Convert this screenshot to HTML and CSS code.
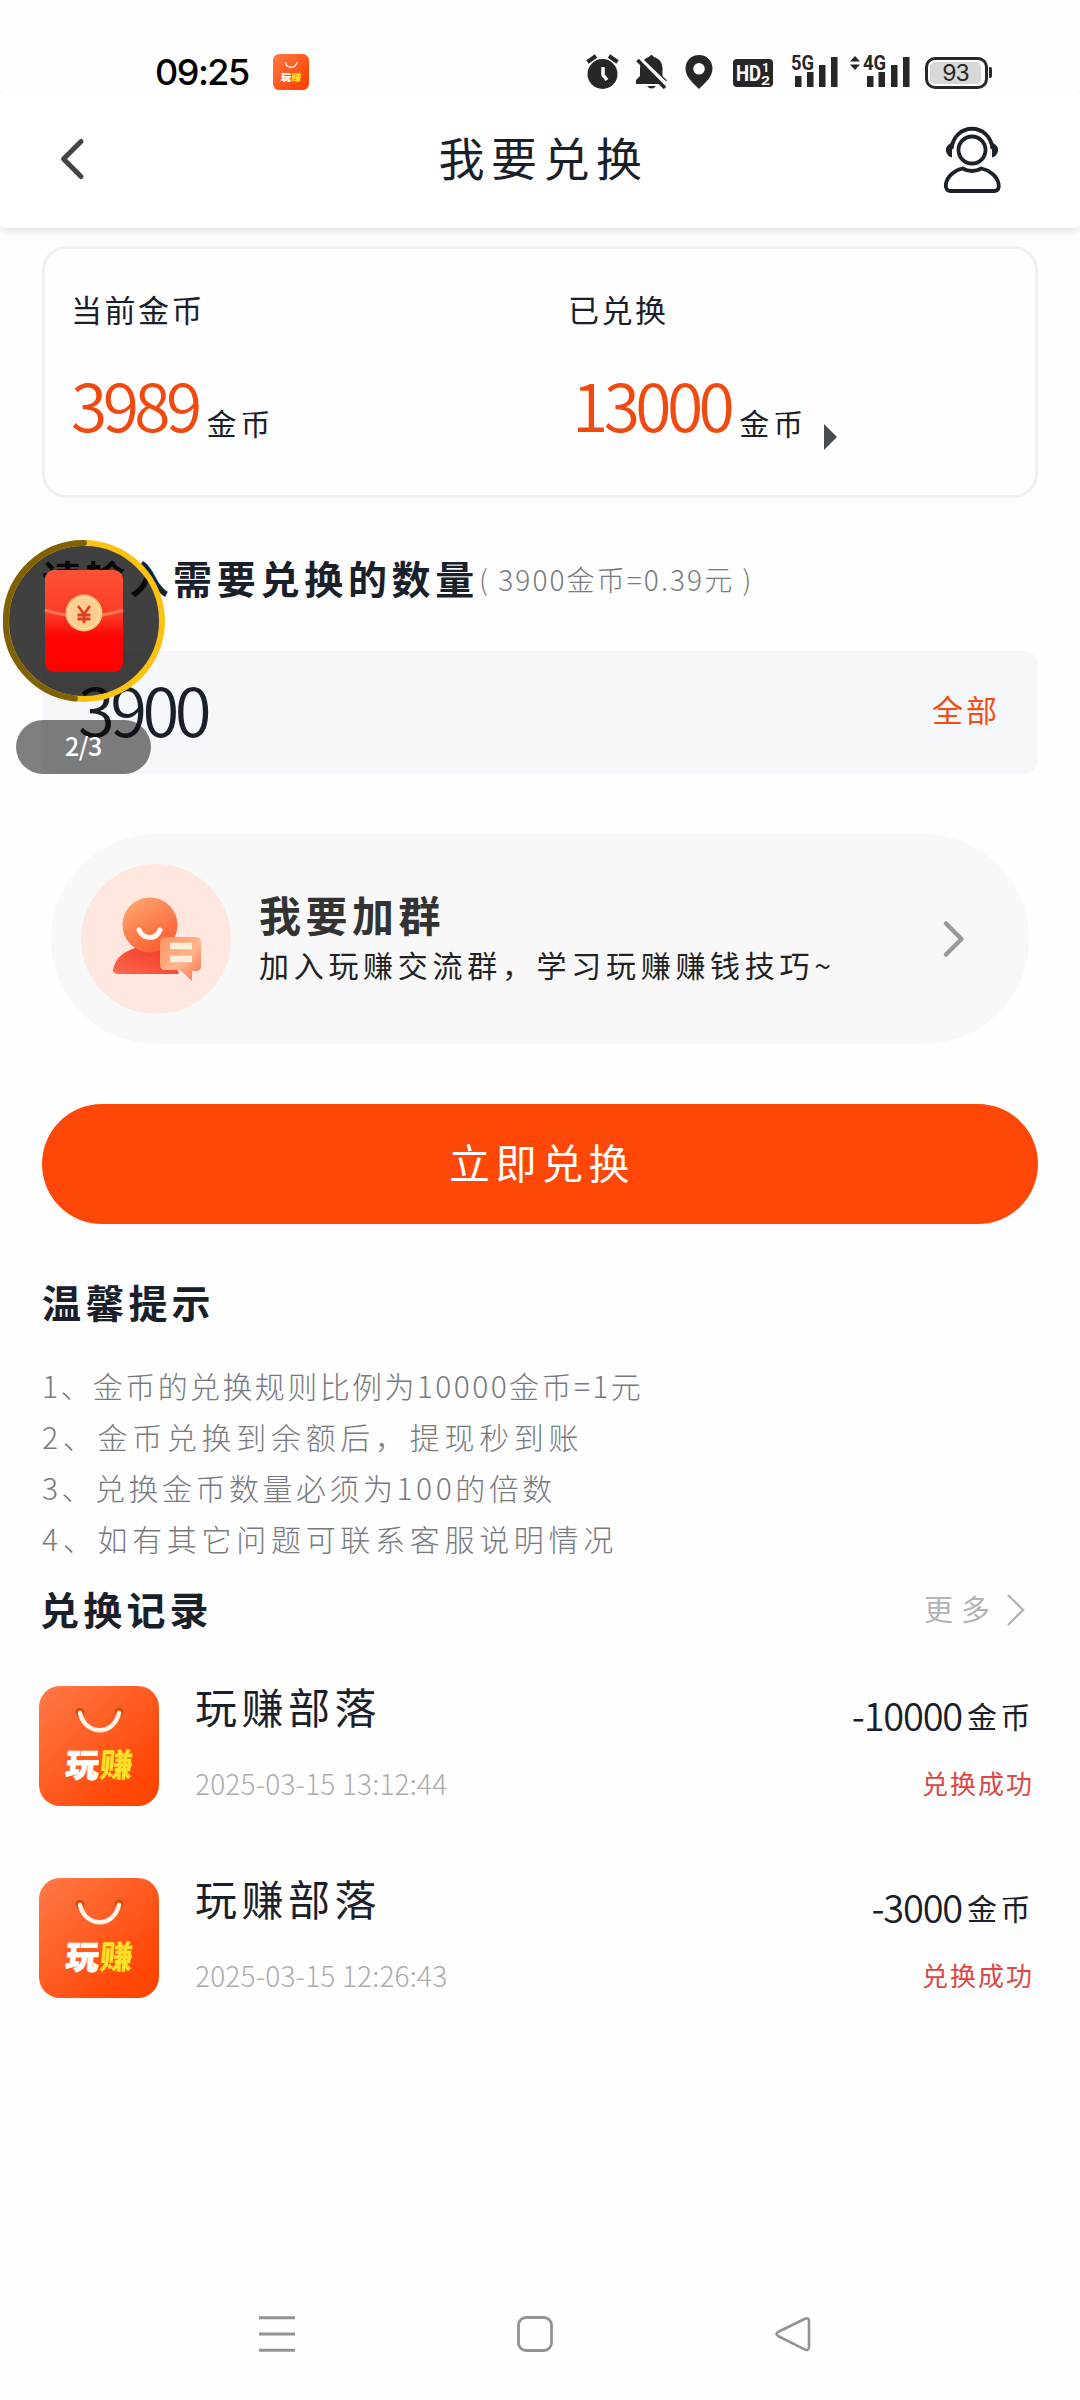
FILE: index.html
```html
<!DOCTYPE html>
<html lang="zh-CN">
<head>
<meta charset="utf-8">
<title>我要兑换</title>
<link rel="stylesheet" href="styles.css">
</head>
<body>
<svg class="defs" width="0" height="0" aria-hidden="true">
  <defs>
    <linearGradient id="bag" x1="0" y1="0" x2="1" y2="1"><stop offset="0" stop-color="#ff7a48"/><stop offset=".75" stop-color="#ff4a0a"/><stop offset="1" stop-color="#ff4300"/></linearGradient>
    <symbol id="app" viewBox="0 0 120 120">
      <rect width="120" height="120" rx="21" fill="url(#bag)"/>
      <circle cx="41" cy="26" r="4.5" fill="#d94d10"/><circle cx="80" cy="26" r="4.5" fill="#d94d10"/>
      <path d="M41 27c5 22 33 24 39 0" fill="none" stroke="#fff4ea" stroke-width="4.4" stroke-linecap="round"/>
      <g class="app-word"><text x="26" y="91" textLength="33" lengthAdjust="spacingAndGlyphs" fill="#fff" stroke="#fff" transform="skewX(-5) translate(8)">玩</text><text x="60" y="91" textLength="33" lengthAdjust="spacingAndGlyphs" fill="#ffdf25" transform="skewX(-5) translate(8)">赚</text></g>
    </symbol>
  </defs>
</svg>

<div class="status">
  <span class="clock">09:25</span>
  <svg class="mini-app" width="36" height="36"><use href="#app"/></svg>
  <div class="indicators">
    <svg class="signals" width="326" height="36" viewBox="0 0 326 36" fill="#272727">
      <circle cx="16.500" cy="20" r="15"/><path d="M17 13v8l4 5" fill="none" stroke="#fff" stroke-width="3.500"/><path d="M1.500 8l8.500-6M23 2l8.500 6" stroke="#272727" stroke-width="4"/>
      <path d="M63 3q2.500-4 5 0c6 2 8.500 6 8.500 12v7l4 4v4H50v-4l4-4v-7c0-6 3-10 9-12zM61 32h9q-4.500 5-9 0z"/><path d="M54 5l29 28" stroke="#fff" stroke-width="4"/><path d="M51.500 6l27.500 28" stroke="#272727" stroke-width="3.600"/>
      <path fill-rule="evenodd" d="M113 1c8 0 13.500 6 13.500 13.500C126.500 23 119 29 113 35c-6-6-13.500-12-13.500-20.500C99.500 7 105 1 113 1zm0 8a5.800 5.800 0 1 0 0 11.600A5.800 5.800 0 0 0 113 9z"/>
      <rect x="147" y="5" width="40" height="28" rx="4"/>
      <g class="sig" fill="#fff"><text x="150" y="27" font-size="22" textLength="25" lengthAdjust="spacingAndGlyphs">HD</text><text x="176" y="18" font-size="13">1</text><text x="175" y="31" font-size="13" textLength="9" lengthAdjust="spacingAndGlyphs">2</text></g>
      <path d="M209 22h6.500v11H209zM221 18h6.500v15H221zM233 11h6.500v22H233zM245 3h6.500v30H245zM281 22h6.500v11H281zM292.500 18h6.500v15h-6.500zM305 11h6.500v22H305zM317 3h6.500v30H317z"/>
      <g class="sig"><text x="205" y="16" font-size="20" textLength="23" lengthAdjust="spacingAndGlyphs">5G</text><text x="277" y="16" font-size="20" textLength="23" lengthAdjust="spacingAndGlyphs">4G</text></g>
      <path d="M264 7.500L269 2l5 5.500zM264 10.500L269 16l5-5.500z"/>
    </svg>
    <div class="battery"><span>93</span></div>
    <i class="nub"></i>
  </div>
</div>

<header class="bar">
  <svg width="30" height="48" viewBox="0 0 30 48"><path d="M24 6.500L6.500 24 24 41.500" fill="none" stroke="#444" stroke-width="5" stroke-linecap="round" stroke-linejoin="round"/></svg>
  <h1>我要兑换</h1>
  <svg class="service" width="60" height="68" viewBox="0 0 60 68" fill="none" stroke="#1a212a" stroke-width="3.800"><circle cx="30" cy="24" r="13.500"/><path d="M9.500 23C12-4 48-4 50.500 23" /><path d="M9 18q-5 3-4 7 1 4 4 5zM51 18q5 3 4 7-1 4-4 5z" fill="#1a212a" stroke-width="2"/><path d="M20.500 42.500q9.500 5 19 0C47 44 55 50 56.500 57.500 57.500 62 56 65 52 65H9c-4 0-6-3-5-7.500C5.500 50 13 44 20.500 42.500z" stroke-linejoin="round"/></svg>
</header>

<main>
  <section class="card">
    <div class="col"><p class="label">当前金币</p><p class="amount"><b>3989</b><span>金币</span></p></div>
    <div class="col second"><p class="label">已兑换</p><p class="amount"><b>13000</b><span>金币</span><i class="tri"></i></p></div>
  </section>

  <h2 class="ask">请输入需要兑换的数量<small>( 3900金币=0.39元 )</small></h2>
  <div class="field"><span class="value">3900</span><span class="all">全部</span></div>

  <div class="group">
    <svg width="150" height="150" viewBox="0 0 150 150">
      <defs><linearGradient id="hd" x1=".1" y1="0" x2=".7" y2="1"><stop stop-color="#ffa870"/><stop offset="1" stop-color="#f95c30"/></linearGradient><linearGradient id="bd" x1="1" y1="0" x2="0" y2="1"><stop stop-color="#f53325"/><stop offset="1" stop-color="#f96b4c"/></linearGradient><linearGradient id="ms" x2="1" y2="1"><stop stop-color="#ff9161"/><stop offset=".55" stop-color="#ffb58b"/><stop offset="1" stop-color="#fa6d50"/></linearGradient></defs>
      <circle cx="75" cy="75" r="75" fill="#ffe6de"/>
      <path d="M32 106C34 93 45 87 54 84h34l10 26H38q-6 0-6-4z" fill="url(#bd)"/>
      <circle cx="69" cy="61" r="27.500" fill="url(#hd)"/>
      <path d="M58 66c5 10 17 10 21 0" fill="none" stroke="#fff8f3" stroke-width="5" stroke-linecap="round"/>
      <path d="M85 73h30q5 0 5 5v24q0 5-5 5h-4v10L99 106H85q-6 0-6-6V79q0-6 6-6z" fill="url(#ms)"/>
      <path d="M89 82h22M89 95h22" stroke="#ffeddb" stroke-width="6.500"/>
    </svg>
    <div class="group-text"><strong>我要加群</strong><span>加入玩赚交流群，学习玩赚赚钱技巧~</span></div>
    <svg class="go" width="24" height="40" viewBox="0 0 24 40"><path d="M4 4.500L19.500 20 4 35.500" fill="none" stroke="#999" stroke-width="4.500" stroke-linecap="round" stroke-linejoin="round"/></svg>
  </div>

  <button class="submit" type="button">立即兑换</button>

  <h2 class="title">温馨提示</h2>
  <ul class="tips">
    <li class="dense">1、金币的兑换规则比例为10000金币=1元</li>
    <li>2、金币兑换到余额后，提现秒到账</li>
    <li class="snug">3、兑换金币数量必须为100的倍数</li>
    <li>4、如有其它问题可联系客服说明情况</li>
  </ul>

  <div class="records-head"><h2>兑换记录</h2><span class="more">更多</span><svg width="20" height="34" viewBox="0 0 20 34"><path d="M2 2l15 15L2 32" fill="none" stroke="#b5b5b5" stroke-width="2.400"/></svg></div>

  <article class="record">
    <svg width="120" height="120"><use href="#app"/></svg>
    <div class="who"><strong>玩赚部落</strong><time>2025-03-15 13:12:44</time></div>
    <div class="what"><span class="delta"><b>-10000</b>金币</span><em>兑换成功</em></div>
  </article>
  <article class="record">
    <svg width="120" height="120"><use href="#app"/></svg>
    <div class="who"><strong>玩赚部落</strong><time>2025-03-15 12:26:43</time></div>
    <div class="what"><span class="delta"><b>-3000</b>金币</span><em>兑换成功</em></div>
  </article>
</main>

<nav class="sysnav">
  <svg width="36" height="36" viewBox="0 0 36 36"><path d="M0 1.800h36M0 18h36M0 34.200h36" stroke="#939393" stroke-width="3"/></svg>
  <svg width="36" height="36" viewBox="0 0 36 36"><rect x="1.500" y="1.500" width="33" height="33" rx="7.500" fill="none" stroke="#939393" stroke-width="2.800"/></svg>
  <svg width="36" height="36" viewBox="0 0 36 36"><path d="M30.500 2.500L3 16q-3 2 0 4l27.500 13.800q3.500 1 3.500-3V5.500q0-4-3.500-3z" fill="none" stroke="#939393" stroke-width="2.600"/></svg>
</nav>

<aside class="bonus">
  <svg width="162" height="162" viewBox="0 0 162 162">
    <defs><linearGradient id="pk" x2="0" y2="1"><stop stop-color="#ff5136"/><stop offset=".43" stop-color="#fa3c25"/><stop offset=".65" stop-color="#ff0606"/><stop offset="1" stop-color="#f00"/></linearGradient></defs>
    <circle cx="81" cy="81" r="77" fill="#000" fill-opacity=".75"/>
    <circle cx="81" cy="81" r="78" fill="none" stroke="#fbc214" stroke-width="6"/>
    <path d="M72 158.500A78 78 0 0 1 81 3" fill="none" stroke="#806205" stroke-width="6" stroke-linecap="round"/>
    <rect x="42" y="30" width="78" height="102" rx="9" fill="url(#pk)"/>
    <path d="M42 70q39 13 78 0" fill="none" stroke="#ff755a" stroke-width="3"/>
    <circle cx="81" cy="73" r="18.500" fill="#f9bd78"/><circle cx="81" cy="73" r="16" fill="#ffcf91" stroke="#ffe0ab" stroke-width="1.500"/>
    <path d="M75 66l6 8 6-8M81 73v10M74.500 75h13M74.500 79h13" fill="none" stroke="#df3f20" stroke-width="2.800"/>
  </svg>
  <span>2/3</span>
</aside>
</body>
</html>
```

FILE: styles.css
```css
* { box-sizing: border-box; margin: 0; padding: 0; }
body { position: relative; width: 1080px; height: 2400px; overflow: hidden; display: flex; flex-direction: column; background: #fefefe; color: #1a202a; font-family: "Noto Sans CJK SC", sans-serif; }
svg { display: block; flex: none; }
.defs { position: absolute; }
i, em { font-style: normal; }
b { font-weight: 300; }
.app-word { font: 900 33px "Noto Sans CJK SC", sans-serif; stroke-width: .8px; }

.status { height: 90px; display: flex; align-items: flex-start; padding: 54px 86px 0 155px; }
.clock { width: 118px; font: 500 36px/37px Inter, sans-serif; letter-spacing: -1.500px; color: #000; }
.indicators { display: flex; margin-left: auto; }
.signals { overflow: visible; }
.sig { font-family: Roboto, sans-serif; font-weight: 700; }
.battery { width: 63px; height: 32px; margin: 3px 0 0 13px; border: 3px solid #292929; border-radius: 10px; padding: 2px; }
.battery span { display: block; width: 51px; height: 22px; border-radius: 5px; background: #d8d8d8; font: 400 23px/22px Inter, sans-serif; letter-spacing: -1px; text-align: center; color: #262626; }
.nub { width: 3px; height: 11px; margin: 13px 2px 0 1px; border-radius: 0 2px 2px 0; background: #292929; }

.bar { height: 138px; display: flex; align-items: center; padding: 0 78px 0 57px; border-radius: 5px; background: #fff; box-shadow: 0 1px 10px rgba(0, 0, 0, .18); clip-path: inset(0 0 -16px 0); }
.bar h1 { flex: 1; padding: 0 0 7px 58px; font-size: 46px; font-weight: 400; letter-spacing: 6.5px; text-align: center; line-height: 60px; }
.service { align-self: flex-start; margin-top: 36px; }

main { flex: 1; padding: 18px 42px 0; }
.card { display: flex; height: 252px; border: 3px solid #f0f0f0; border-radius: 24px; padding: 40px 26px 0; }
.col { width: 497px; }
.second { width: auto; }
.label { font-size: 31px; line-height: 40px; letter-spacing: 2.5px; }
.amount { display: flex; align-items: flex-end; height: 76px; margin-top: 42px; }
.amount b { align-self: flex-start; font-size: 66px; line-height: 64px; letter-spacing: -4.600px; color: #f14a10; margin-right: 9px; font-weight: 350; }
.second b { margin-left: 4px; }
.amount span { font-size: 30px; line-height: 40px; letter-spacing: 4px; margin-bottom: 5px; }
.tri { margin: 0 0 -3px 17px; border: 13px solid transparent; border-left-color: #474c51; border-right: 0; }

.ask { display: flex; align-items: center; height: 64px; margin: 47px 0 42px; font-size: 39px; font-weight: 700; letter-spacing: 4.700px; white-space: nowrap; }
.ask small { padding-top: 4px; font-size: 28px; font-weight: 300; letter-spacing: 2.100px; color: #777b80; }
.field { display: flex; align-items: center; justify-content: space-between; height: 123px; padding: 0 38px 9px 36px; border-radius: 14px; background: #f5f7fb; }
.value { font-size: 67px; line-height: 80px; font-weight: 350; letter-spacing: -4.500px; }
.all { font-size: 31px; letter-spacing: 3px; color: #f04e14; }

.group { display: flex; align-items: center; height: 210px; margin: 60px 9px; padding: 0 63px 0 30px; border-radius: 105px; background: #f8f8f8; }
.group-text { flex: 1; display: flex; flex-direction: column; margin: -4px 0 0 28px; white-space: nowrap; }
.group-text strong { font-size: 42px; line-height: 54px; letter-spacing: 4.500px; color: #333; }
.group-text span { font-size: 30px; line-height: 46px; letter-spacing: 4.700px; color: #222; }

.submit { display: block; width: 100%; height: 120px; padding: 0 0 6px 4px; border: 0; border-radius: 60px; background: #ff4807; color: #fff; font: 400 41px/60px "Noto Sans CJK SC", sans-serif; letter-spacing: 5.500px; }
.title, .records-head h2 { font-size: 39px; line-height: 60px; letter-spacing: 4.200px; }
.title { margin-top: 47px; }
.tips { margin-top: 29px; list-style: none; font-size: 30px; font-weight: 300; line-height: 51px; letter-spacing: 4.700px; color: #777a7e; white-space: nowrap; }
.tips .dense { letter-spacing: 2.400px; }
.tips .snug { letter-spacing: 3.500px; }

.records-head { display: flex; align-items: center; height: 91px; padding: 0 12px 4px 0; }
.records-head h2 { margin-left: -2px; }
.more { margin-left: auto; font-size: 29px; letter-spacing: 8px; color: #b3b3b3; }
.records-head svg { margin: 5px 0 0 8px; }
.record { display: flex; height: 120px; margin: 31px 4px 72px -3px; }
.record + .record { margin-top: 0; }
.who, .what { display: flex; flex-direction: column; justify-content: space-between; }
.who { margin-left: 36px; }
.who strong { margin-top: -2px; font-size: 42px; font-weight: 400; line-height: 44px; letter-spacing: 4.500px; }
time { font-size: 28px; font-weight: 300; line-height: 46px; letter-spacing: .2px; color: #acacac; }
.what { align-items: flex-end; margin-left: auto; padding-top: 5px; }
.delta { display: flex; align-items: center; font-size: 30px; line-height: 48px; letter-spacing: 3.500px; }
.delta b { font-size: 38px; font-weight: 350; letter-spacing: -1.200px; margin-right: 5px; }
.what em { font-size: 26px; line-height: 46px; letter-spacing: 2px; color: #dc4643; }

.sysnav { display: flex; gap: 222px; height: 84px; padding-left: 259px; }
.bonus { position: absolute; left: 3px; top: 540px; }
.bonus span { display: block; width: 135px; height: 54px; margin: 18px 0 0 13px; border-radius: 27px; background: rgba(0, 0, 0, .5); color: #fff; font: 500 25px/50px "Noto Sans CJK SC", sans-serif; text-align: center; letter-spacing: -.5px; }
```
